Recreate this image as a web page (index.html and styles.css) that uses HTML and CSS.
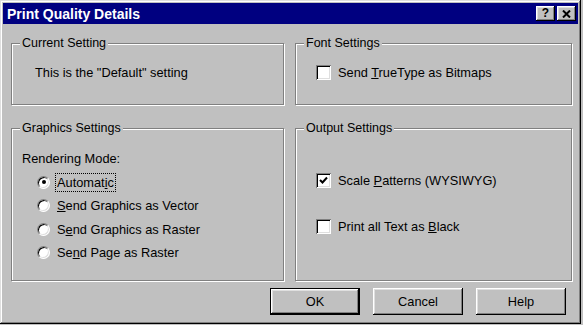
FILE: index.html
```html
<!DOCTYPE html>
<html lang="en">
<head>
	<meta charset="UTF-8">
	<title>Print Quality Details</title>
	<link rel="stylesheet" href="styles.css">
</head>
<body>
	<div class="dialog">
		<div class="titlebar">
			<span class="title">Print Quality Details</span>
			<div class="tbtns">
				<span class="tbtn help">?</span>
				<span class="tbtn">
					<svg width="9" height="8" viewBox="0 0 9 8"><path d="M1 0.5 L8 7.5 M8 0.5 L1 7.5" stroke="#000" stroke-width="2" fill="none"/></svg>
				</span>
			</div>
		</div>
		<div class="content">
			<div class="groups">
				<fieldset class="group">
					<legend>Current Setting</legend>
					<p class="info">This is the "Default" setting</p>
				</fieldset>
				<fieldset class="group">
					<legend>Font Settings</legend>
					<div class="check first-check"><span class="box"></span><span>Send <u>T</u>rueType as Bitmaps</span></div>
				</fieldset>
				<fieldset class="group">
					<legend>Graphics Settings</legend>
					<p class="mode">Rendering Mode:</p>
					<ul class="radios">
						<li><span class="radio on"></span><span class="focus">Automat<u>i</u>c</span></li>
						<li><span class="radio"></span><span><u>S</u>end Graphics as Vector</span></li>
						<li><span class="radio"></span><span>S<u>e</u>nd Graphics as Raster</span></li>
						<li><span class="radio"></span><span>Se<u>n</u>d Page as Raster</span></li>
					</ul>
				</fieldset>
				<fieldset class="group">
					<legend>Output Settings</legend>
					<div class="check out-first"><span class="box">
						<svg width="9" height="9" viewBox="0 0 9 9"><path d="M1 4 L3.5 6.5 L8 1.5" stroke="#000" stroke-width="2" fill="none"/></svg>
					</span><span>Scale <u>P</u>atterns (WYSIWYG)</span></div>
					<div class="check out-second"><span class="box"></span><span>Print all Text as <u>B</u>lack</span></div>
				</fieldset>
			</div>
			<div class="buttons">
				<button class="default">OK</button>
				<button>Cancel</button>
				<button>Help</button>
			</div>
		</div>
	</div>
</body>
</html>
```

FILE: styles.css
```css
*{margin: 0;padding: 0;box-sizing: border-box;}
body{
	background: #c0c0c0;
	font-family: "Liberation Sans", Arial, sans-serif;
	font-size: 12.8px;
	color: #000;
}
.dialog{
	width: 581px;
	height: 324px;
	padding: 3px;
	background: #c0c0c0;
	box-shadow: inset -1px -1px #000, inset 1px 1px #dfdfdf, inset -2px -2px #808080, inset 2px 2px #fff;
}
.titlebar{
	height: 21px;
	background: #000080;
	display: flex;
	align-items: center;
	justify-content: space-between;
	padding: 0 2px 0 4px;
}
.title{
	color: #fff;
	font-weight: bold;
	font-size: 14px;
}
.tbtns{
	display: flex;
	gap: 2px;
}
.tbtn{
	width: 19px;
	height: 15px;
	background: #c0c0c0;
	box-shadow: inset -1px -1px #000, inset 1px 1px #fff, inset -2px -2px #808080, inset 2px 2px #dfdfdf;
	display: flex;
	align-items: center;
	justify-content: center;
	font-weight: bold;
	font-size: 12px;
	line-height: 15px;
}
.content{
	padding: 12px 6px 0 8px;
}
.groups{
	display: grid;
	grid-template-columns: 273px 277px;
	grid-template-rows: 69px 160px;
	column-gap: 11px;
	row-gap: 16px;
}
.group{
	border: 1px solid #808080;
	box-shadow: inset 1px 1px #fff, 1px 1px #fff;
	padding: 0 8px;
	min-width: 0;
}
.group legend{
	padding: 0 2px;
	font-size: 12.5px;
	line-height: 15px;
	background: #c0c0c0;
}
.info{
	margin: 14px 0 0 15px;
	line-height: 15px;
}
.check{
	display: flex;
	align-items: center;
	line-height: 15px;
	margin-left: 12px;
}
.box{
	width: 15px;
	height: 15px;
	margin-right: 7px;
	background: #fff;
	box-shadow: inset 1px 1px #808080, inset -1px -1px #fff, inset 2px 2px #000, inset -2px -2px #dfdfdf;
	display: flex;
	align-items: center;
	justify-content: center;
}
.first-check{margin-top: 14px;}
.out-first{margin-top: 36.5px;}
.out-second{margin-top: 31px;}
.mode{
	margin: 14.5px 0 0 2px;
	line-height: 15px;
}
.radios{
	list-style: none;
	margin: 5px 0 0 17px;
}
.radios li{
	height: 23.5px;
	display: flex;
	align-items: center;
	line-height: 15px;
}
.radio{
	width: 13px;
	height: 13px;
	margin-right: 7px;
	border-radius: 50%;
	background: #fff;
	border: 1px solid;
	border-color: #808080 #fff #fff #808080;
	box-shadow: inset 1px 1px #000, inset -1px -1px #dfdfdf;
	position: relative;
}
.radio.on::after{
	content: "";
	position: absolute;
	left: 3.5px;
	top: 3.5px;
	width: 4px;
	height: 4px;
	border-radius: 50%;
	background: #000;
}
.focus{
	border: 1px dotted #000;
	padding: 1px 1px;
	margin-left: -2px;
}
.buttons{
	display: flex;
	justify-content: flex-end;
	gap: 13px;
	margin-top: 7px;
	padding-right: 6px;
}
button{
	width: 90px;
	height: 27px;
	border: none;
	background: #c0c0c0;
	font-family: inherit;
	font-size: 12.8px;
	color: #000;
	box-shadow: inset -1px -1px #000, inset 1px 1px #fff, inset -2px -2px #808080, inset 2px 2px #dfdfdf;
}
button.default{
	border: 1px solid #000;
	box-shadow: inset -1px -1px #000, inset 1px 1px #fff, inset -2px -2px #808080, inset 2px 2px #dfdfdf;
}
```
